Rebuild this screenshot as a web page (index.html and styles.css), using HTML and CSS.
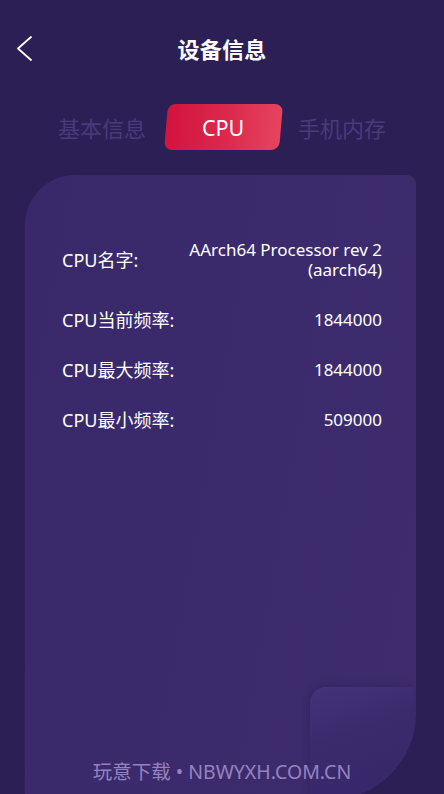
FILE: index.html
```html
<!DOCTYPE html>
<html lang="zh-CN">
<head>
<meta charset="utf-8">
<link rel="stylesheet" href="styles.css">
</head>
<body>
<div class="screen">
  <header class="topbar">
    <div class="back">
      <svg width="20" height="30" viewBox="0 0 20 30"><path d="M15 2 L2 13.5 L15 25" fill="none" stroke="#ffffff" stroke-width="1.8" stroke-linecap="round" stroke-linejoin="round"/></svg>
    </div>
    <h1 class="title">设备信息</h1>
    <div></div>
  </header>
  <nav class="tabs">
    <div class="tab">基本信息</div>
    <div class="tab active"><span>CPU</span></div>
    <div class="tab">手机内存</div>
  </nav>
  <section class="card">
    <div class="row">
      <div class="label">CPU名字:</div>
      <div class="value">AArch64 Processor rev 2<br>(aarch64)</div>
    </div>
    <div class="row">
      <div class="label">CPU当前频率:</div>
      <div class="value">1844000</div>
    </div>
    <div class="row">
      <div class="label">CPU最大频率:</div>
      <div class="value">1844000</div>
    </div>
    <div class="row">
      <div class="label">CPU最小频率:</div>
      <div class="value">509000</div>
    </div>
    <div class="fold"></div>
  </section>
  <div class="watermark">玩意下载 • NBWYXH.COM.CN</div>
</div>
</body>
</html>
```
FILE: styles.css
```css
html, body {
  margin: 0;
  padding: 0;
}
body {
  background: #2c1f56;
  font-family: "Noto Sans", "Noto Sans CJK SC", sans-serif;
  color: #ffffff;
}
.screen {
  position: relative;
  width: 444px;
  height: 794px;
  overflow: hidden;
  background: #2c1f56;
}
.topbar {
  height: 98px;
  display: grid;
  grid-template-columns: 1fr auto 1fr;
  align-items: center;
}
.back {
  padding-left: 16px;
  padding-top: 2px;
  display: flex;
  align-items: center;
}
.title {
  margin: 0;
  font-size: 22px;
  font-weight: 700;
  letter-spacing: 0.3px;
  line-height: 1;
}
.tabs {
  margin-top: 6px;
  height: 46px;
  display: flex;
  justify-content: center;
  gap: 4px;
}
.tab {
  width: 115px;
  display: flex;
  align-items: center;
  justify-content: center;
  font-size: 22px;
  color: #4a3a79;
}
.tab.active {
  background: linear-gradient(90deg, #d2133e 0%, #dc2a4d 55%, #e6445f 100%);
  border-radius: 8px;
  transform: skewX(-5deg);
  color: #ffffff;
  font-size: 21.5px;
  margin-left: 2px;
}
.tab.active span {
  transform: skewX(5deg);
}
.card {
  position: relative;
  margin: 25px 0 0 25px;
  width: 391px;
  height: 625px;
  box-sizing: border-box;
  padding: 65px 34px 0 37px;
  background: linear-gradient(100deg, #3a296a 0%, #3c2b6c 60%, #3e2c6e 100%);
  border-radius: 50px 9px 88px 0;
  overflow: hidden;
  display: flex;
  flex-direction: column;
  gap: 30px;
}
.row {
  display: flex;
  justify-content: space-between;
  align-items: center;
  line-height: 20px;
}
.label {
  font-size: 18px;
  color: #ffffff;
}
.value {
  font-size: 17px;
  text-align: right;
  color: #ffffff;
}
.fold {
  position: absolute;
  left: 285px;
  top: 512px;
  right: 2px;
  bottom: 0;
  border-radius: 16px 0 0 0;
  background: linear-gradient(160deg, #453379 0%, #3b2a6c 40%, #36276a 100%);
  box-shadow: -2px -2px 6px rgba(30, 18, 70, 0.25);
}
.watermark {
  position: absolute;
  left: 0;
  right: 0;
  top: 759px;
  text-align: center;
  font-size: 19.5px;
  color: #9583c0;
  line-height: 26px;
}
```
